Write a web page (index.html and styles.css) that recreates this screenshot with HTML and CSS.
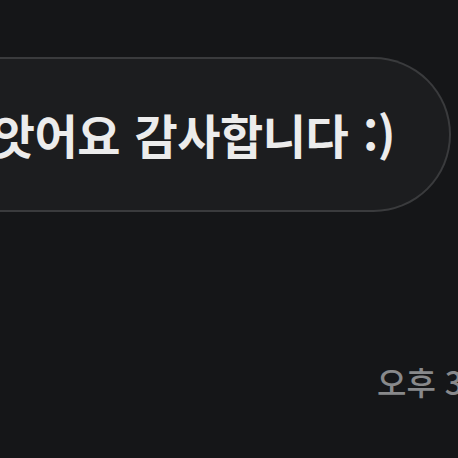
FILE: index.html
```html
<!DOCTYPE html>
<html lang="ko">
<head>
    <meta charset="UTF-8">
    <meta name="viewport" content="width=device-width, initial-scale=1.0">
    <title>Chat</title>
    <link rel="stylesheet" href="styles.css">
</head>
<body>
    <div class="chat">
        <div class="bubble-row">
            <div class="bubble">
                <span class="bubble-text">잘 받앗어요 감사합니다 :)</span>
            </div>
        </div>
        <div class="meta-row">
            <span class="time">오후 3:42</span>
        </div>
    </div>
</body>
</html>
```

FILE: styles.css
```css
* {
    margin: 0;
    padding: 0;
    box-sizing: border-box;
    font-family: "Noto Sans CJK KR", "Noto Sans", sans-serif;
}

body {
    background-color: #151618;
    width: 458px;
    height: 458px;
    overflow: hidden;
}

.chat {
    display: flex;
    flex-direction: column;
    padding-top: 57px;
}

.bubble-row {
    display: flex;
    justify-content: flex-end;
    padding-right: 7px;
}

.bubble {
    display: flex;
    align-items: center;
    justify-content: flex-end;
    flex-shrink: 0;
    height: 155px;
    padding-right: 54px;
    padding-bottom: 2px;
    margin-left: -200px;
    background-color: #1c1d1f;
    border: 2px solid #3a3b3d;
    border-left: none;
    border-radius: 0 78px 78px 0;
}

.bubble-text {
    white-space: nowrap;
    color: #ececec;
    font-size: 47px;
    font-weight: 700;
    letter-spacing: -0.5px;
    word-spacing: 2px;
}

.meta-row {
    display: flex;
    padding-left: 377px;
    margin-top: 146px;
}

.time {
    white-space: nowrap;
    color: #88898b;
    font-size: 32px;
    font-weight: 500;
}
```
